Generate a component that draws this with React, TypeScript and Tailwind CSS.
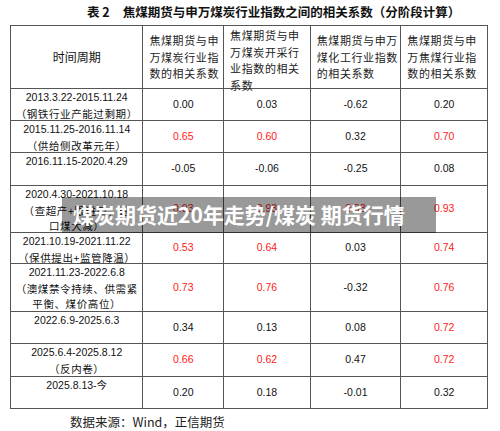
import React from "react";

type Row = { label: string[]; h: string; vals: [string, boolean][] };

const rows: Row[] = [
  { label: ["2013.3.22-2015.11.24", "（钢铁行业产能过剩期）"], h: "h-[32px]", vals: [["0.00", false], ["0.03", false], ["-0.62", false], ["0.20", false]] },
  { label: ["2015.11.25-2016.11.14", "（供给侧改革元年）"], h: "h-[32px]", vals: [["0.65", true], ["0.60", true], ["0.32", false], ["0.70", true]] },
  { label: ["2016.11.15-2020.4.29"], h: "h-[33px]", vals: [["-0.05", false], ["-0.06", false], ["-0.25", false], ["0.08", false]] },
  { label: ["2020.4.30-2021.10.18", "（查超产+限进口，进", "口煤大减）"], h: "h-[47px]", vals: [["0.93", true], ["0.93", true], ["0.93", true], ["0.93", true]] },
  { label: ["2021.10.19-2021.11.22", "（保供提出+监管降温）"], h: "h-[31px]", vals: [["0.53", true], ["0.64", true], ["0.03", false], ["0.74", true]] },
  { label: ["2021.11.23-2022.6.8", "（澳煤禁令持续、供需紧", "平衡、煤价高位）"], h: "h-[48px]", vals: [["0.73", true], ["0.76", true], ["-0.32", false], ["0.76", true]] },
  { label: ["2022.6.9-2025.6.3"], h: "h-[32px]", vals: [["0.34", false], ["0.13", false], ["0.08", false], ["0.72", true]] },
  { label: ["2025.6.4-2025.8.12", "（反内卷）"], h: "h-[33px]", vals: [["0.66", true], ["0.62", true], ["0.47", false], ["0.72", true]] },
  { label: ["2025.8.13-今"], h: "h-[31px]", vals: [["0.20", false], ["0.18", false], ["-0.01", false], ["0.32", false]] },
];

const heads = [
  ["焦煤期货与申", "万煤炭行业指", "数的相关系数"],
  ["焦煤期货与申", "万煤炭开采行", "业指数的相关", "系数"],
  ["焦煤期货与申万", "煤化工行业指数", "的相关系数"],
  ["焦煤期货与申", "万焦煤行业指", "数的相关系数"],
];

const colW = ["w-[133px]", "w-[81px]", "w-[87px]", "w-[91px]", "w-[86px]"];

const cjk = "font-['Noto_Sans_CJK_SC',sans-serif]";
const latin = "font-['Liberation_Sans','Noto_Sans_CJK_SC',sans-serif]";

export default function App() {
  return (
    <div className={`relative w-[500px] h-[431px] bg-white overflow-hidden ${latin}`}>
      <div className={`h-[25px] flex items-center pl-[87px] text-[12.5px] font-bold text-[#111] ${cjk}`}>
        <span className="mr-[13px]">表 2</span>
        <span>焦煤期货与申万煤炭行业指数之间的相关系数（分阶段计算）</span>
      </div>
      <div className="ml-[10px] w-[478px] border border-[#555] flex flex-col text-[#111]">
        <div className="flex h-[63px] border-b border-[#555]">
          <div className={`${colW[0]} border-r border-[#555] flex items-center justify-center text-[12px] ${cjk}`}>
            时间周期
          </div>
          {heads.map((h, i) => (
            <div
              key={i}
              className={`${colW[i + 1]} ${i < 3 ? "border-r border-[#555]" : ""} flex flex-col ${i === 1 ? "justify-start pt-[1px]" : "justify-center"} pl-[6px] text-[11px] leading-[16.5px] tracking-[0.6px] text-[#222] ${cjk}`}
            >
              {h.map((l, j) => (
                <div key={j} className="whitespace-nowrap">{l}</div>
              ))}
            </div>
          ))}
        </div>
        {rows.map((r, i) => (
          <div key={i} className={`flex ${r.h} ${i < rows.length - 1 ? "border-b border-[#555]" : ""}`}>
            <div className={`${colW[0]} border-r border-[#555] flex flex-col items-center pt-[1px] text-[10.5px] leading-[15.5px]`}>
              {r.label.map((l, j) => (
                <div key={j} className={`whitespace-nowrap ${j === 0 ? latin : `${cjk} tracking-[0.6px]`}`}>
                  {l}
                </div>
              ))}
            </div>
            {r.vals.map(([v, red], k) => (
              <div
                key={k}
                className={`${colW[k + 1]} ${k < 3 ? "border-r border-[#555]" : ""} flex items-center justify-center text-[10.5px] ${red ? "text-[#ff2020]" : "text-[#111]"}`}
              >
                {v}
              </div>
            ))}
          </div>
        ))}
      </div>
      <div className={`pl-[70px] pt-[4px] text-[12.5px] text-[#222] ${cjk}`}>
        数据来源：Wind，正信期货
      </div>
      <div
        className={`absolute left-[62px] top-[197px] w-[374px] h-[36px] bg-black/40 flex items-center pl-[11px] text-white font-bold text-[21px] whitespace-nowrap ${cjk}`}
      >
        煤炭期货近20年走势/煤炭 期货行情
      </div>
    </div>
  );
}
